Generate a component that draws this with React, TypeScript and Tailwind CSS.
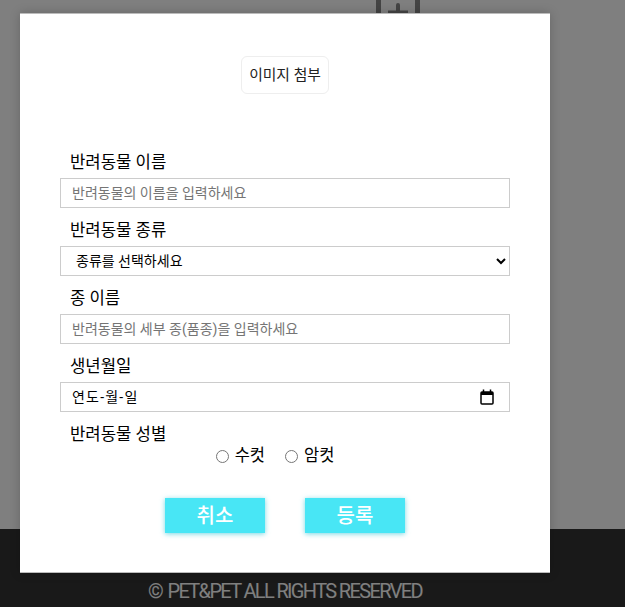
const font = "font-['Roboto','Noto_Sans_CJK_KR',sans-serif]";

function Field({ label, children }: { label: string; children: React.ReactNode }) {
  return (
    <div className="flex flex-col">
      <label className="h-[32px] pl-[10px] text-[16.7px] leading-[34px] text-black">{label}</label>
      {children}
    </div>
  );
}

const boxClass =
  "h-[30px] w-full border border-[#ccc] bg-white pl-[11px] text-[14px] leading-[28px] placeholder:text-[#757575] text-black outline-none";

export default function App() {
  return (
    <div className={`relative h-[607px] w-[625px] overflow-hidden bg-white ${font}`}>
      <div className="flex h-[529px] justify-end pr-[204px]">
        <svg width="46" height="20" viewBox="0 0 46 20" className="text-[#888]">
          <path d="M3.5 0V20M42.5 0V20" stroke="currentColor" strokeWidth="5" fill="none" />
          <path d="M23 5V20" stroke="currentColor" strokeWidth="4" strokeLinecap="round" fill="none" />
          <path d="M13 12H33" stroke="currentColor" strokeWidth="3" fill="none" />
        </svg>
      </div>
      <footer className="flex h-[78px] justify-center bg-[#333] pr-[55px] pt-[50px] text-[20px] leading-[24px] tracking-[-1.65px] text-white">
        <span className="mr-[2px]">©</span>
        <span>&nbsp;PET&amp;PET ALL RIGHTS RESERVED</span>
      </footer>
      <div className="absolute inset-0 flex items-start bg-black/50 pl-[20px] pt-[13px]">
        <div className="flex h-[560px] w-[530px] flex-col border-y border-[#bbb] bg-white px-[40px] shadow-[0_0_10px_rgba(0,0,0,0.2)]">
          <div className="flex justify-center pt-[42px]">
            <button className="h-[38px] w-[88px] rounded-[6px] border border-[#eee] bg-white text-[14.8px] text-[#222]">
              이미지 첨부
            </button>
          </div>
          <form className="mt-[52px] flex flex-col gap-[6px]">
            <Field label="반려동물 이름">
              <input className={boxClass} placeholder="반려동물의 이름을 입력하세요" />
            </Field>
            <Field label="반려동물 종류">
              <select className={`${boxClass} appearance-auto`} defaultValue="">
                <option value="">종류를 선택하세요</option>
              </select>
            </Field>
            <Field label="종 이름">
              <input className={boxClass} placeholder="반려동물의 세부 종(품종)을 입력하세요" />
            </Field>
            <Field label="생년월일">
              <div className={`${boxClass} flex items-center justify-between pr-[15px]`}>
                <span className="tracking-[1.2px]">연도-월-일</span>
                <svg width="14" height="16" viewBox="0 0 14 16" className="text-black">
                  <rect x="1" y="3" width="12" height="12" rx="1" fill="none" stroke="currentColor" strokeWidth="1.5" />
                  <path d="M1 4.5H13" stroke="currentColor" strokeWidth="3" />
                  <path d="M3.5 0.5V3M10.5 0.5V3" stroke="currentColor" strokeWidth="1.5" />
                </svg>
              </div>
            </Field>
            <div>
              <div className="h-[27px] pl-[10px] text-[16.7px] leading-[34px] text-black">반려동물 성별</div>
              <div className="flex h-[22px] items-center justify-center gap-[20px] pr-[20px] text-[16.5px] text-black">
                <label className="flex items-center gap-[6px]">
                  <input type="radio" name="g" className="m-0 h-[13px] w-[13px]" />
                  수컷
                </label>
                <label className="flex items-center gap-[6px]">
                  <input type="radio" name="g" className="m-0 h-[13px] w-[13px]" />
                  암컷
                </label>
              </div>
            </div>
            <div className="mt-[25px] flex justify-center gap-[40px]">
              <button type="button" className="h-[35px] w-[100px] bg-[#48e6f5] text-[20px] font-medium text-white shadow-[0_1px_5px_rgba(60,200,215,0.7)]">취소</button>
              <button type="button" className="h-[35px] w-[100px] bg-[#48e6f5] text-[20px] font-medium text-white shadow-[0_1px_5px_rgba(60,200,215,0.7)]">등록</button>
            </div>
          </form>
        </div>
      </div>
    </div>
  );
}
